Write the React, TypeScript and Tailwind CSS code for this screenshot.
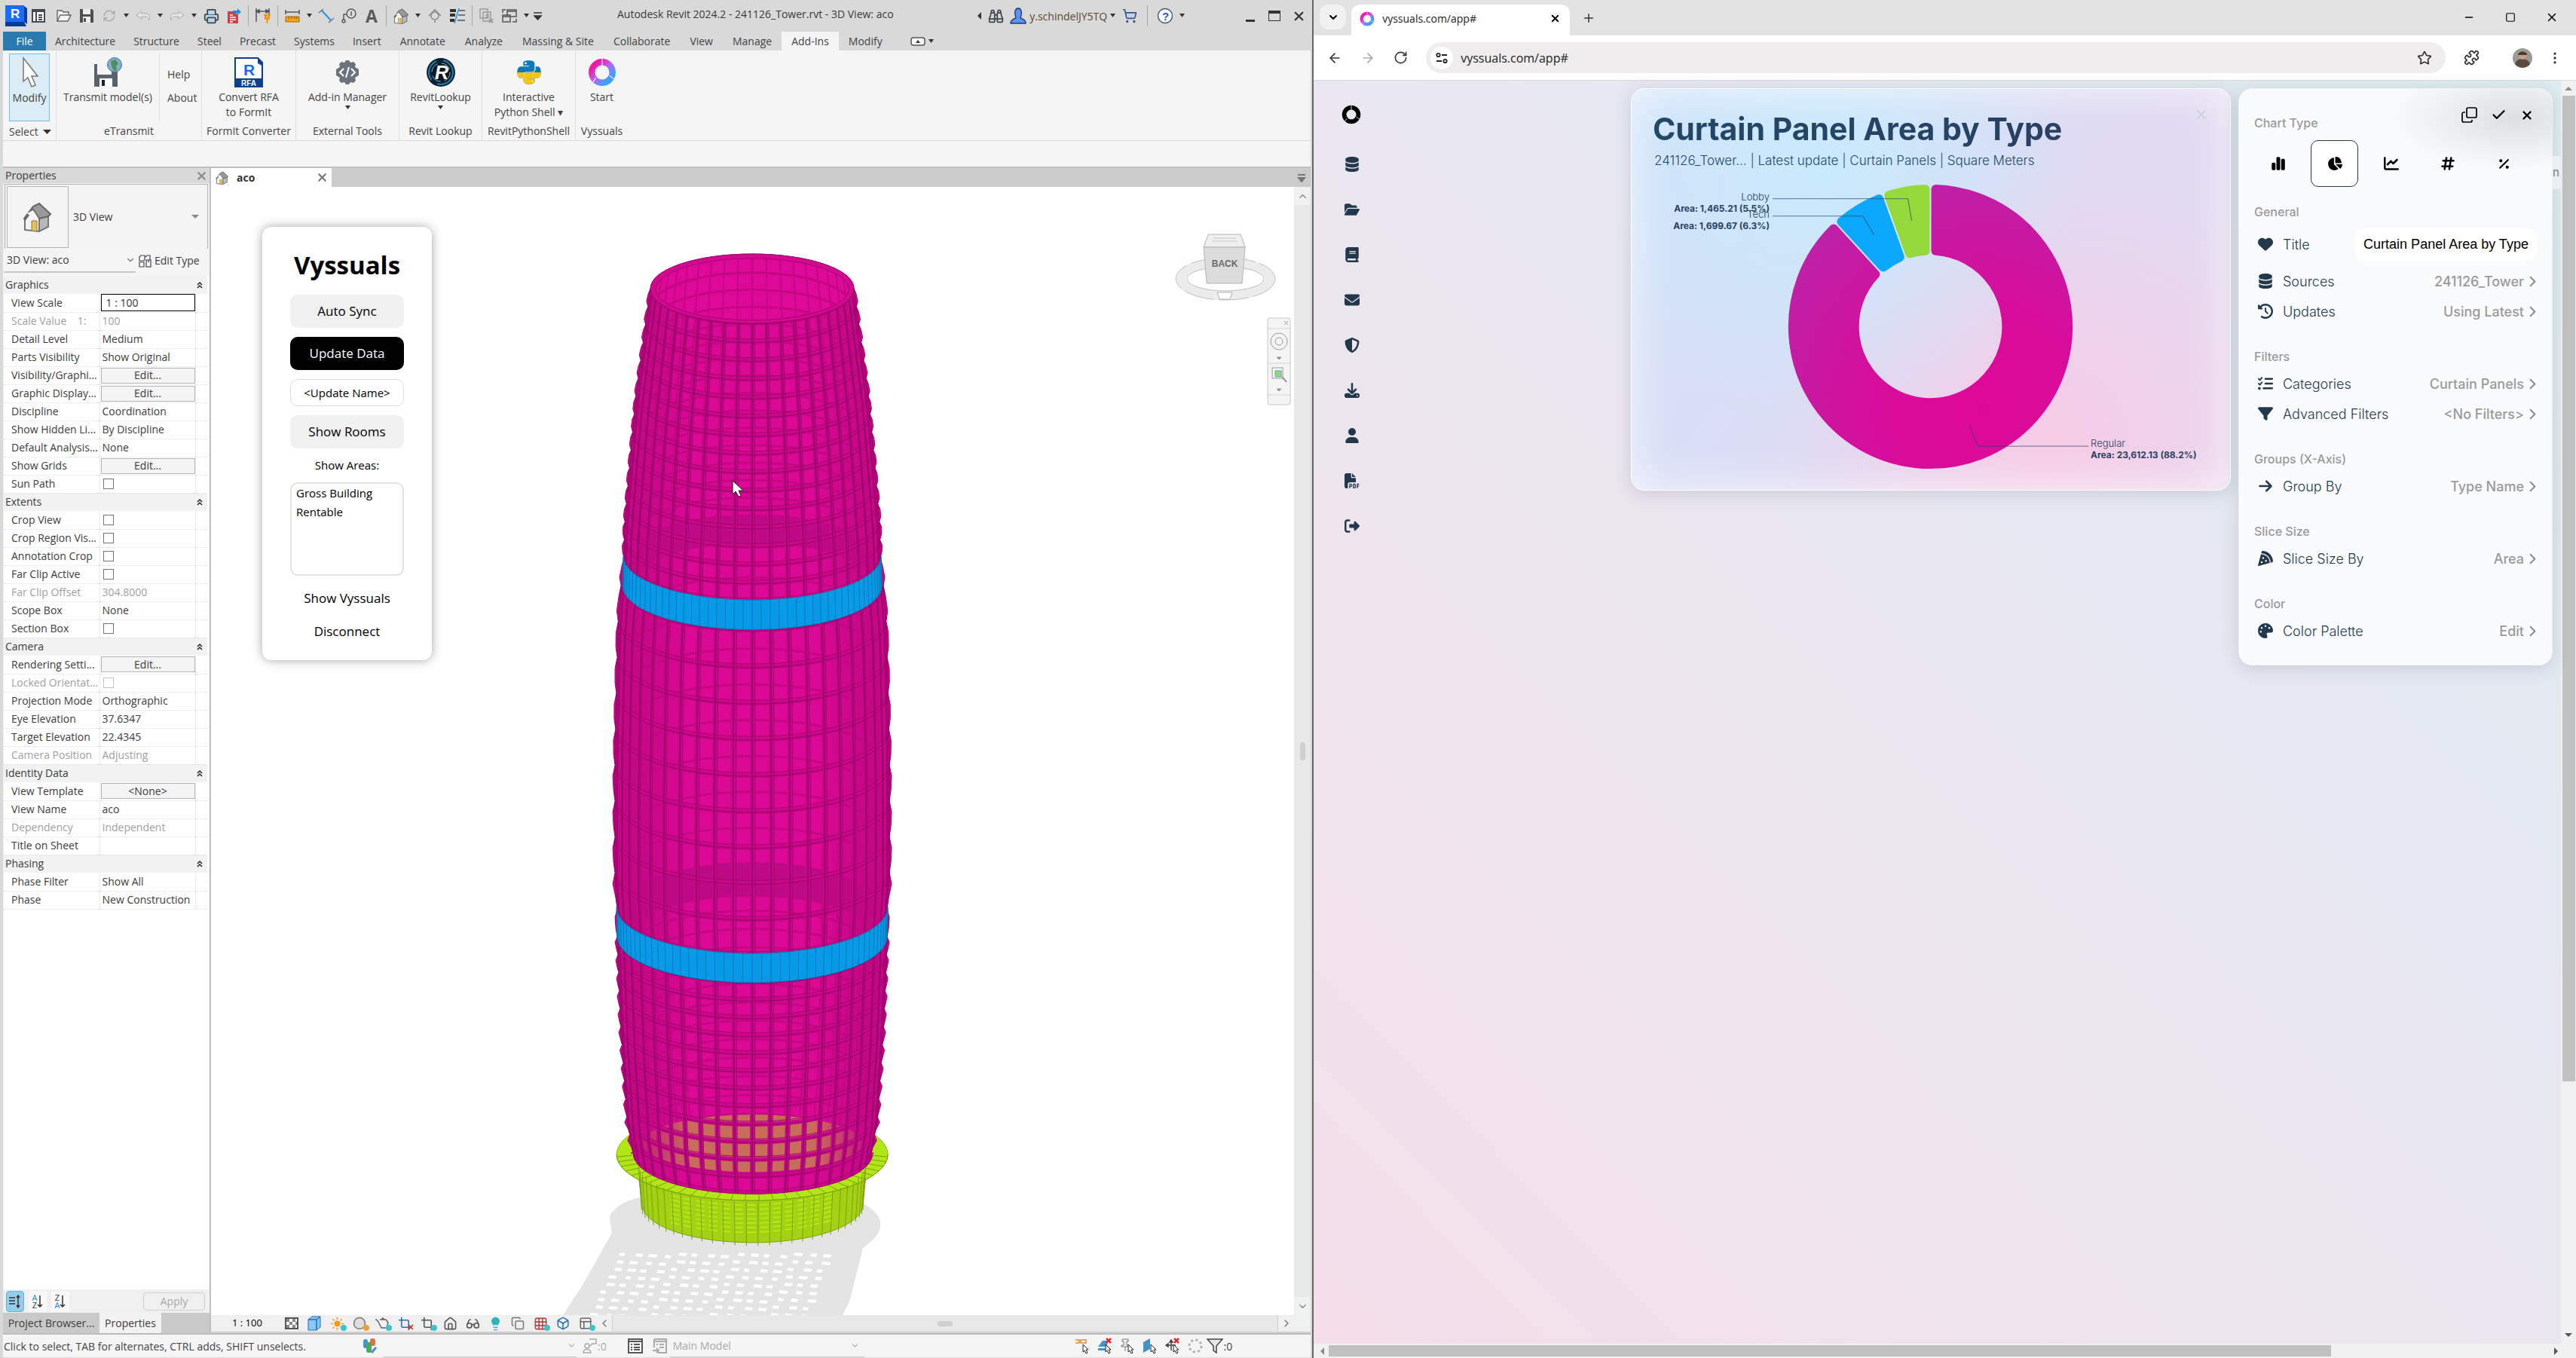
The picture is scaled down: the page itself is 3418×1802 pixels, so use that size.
// src/App.tsx
import type { ReactNode } from 'react';
import {
  ArrowLeft, ArrowRight, Binoculars, Box, Check, ChevronDown, ChevronLeft, ChevronRight, ChevronUp,
  Circle, Copy, EllipsisVertical, Glasses, Lightbulb, Minus, Plus, Printer, Puzzle, RotateCw,
  ShoppingCart, Square, Star, X, RefreshCw, Grid3x3, House, Crop, Sun, PanelsTopLeft,
} from 'lucide-react';
import {
  FaArrowRight, FaBook, FaChartLine, FaChartPie, FaChartSimple, FaClockRotateLeft, FaDatabase, FaDownload,
  FaEnvelope, FaFilePdf, FaFilter, FaFolderOpen, FaHashtag, FaHeart, FaListCheck, FaPalette, FaPercent,
  FaPizzaSlice, FaPython, FaRightFromBracket, FaShieldHalved, FaUser,
} from 'react-icons/fa6';

type Row = { label: string; kind?: 'text' | 'edit' | 'check' | 'input'; value?: string; off?: boolean };

const groups: { title: string; rows: Row[] }[] = [
  {
    title: 'Graphics',
    rows: [
      { label: 'View Scale', kind: 'input', value: '1 : 100' },
      { label: 'Scale Value    1:', value: '100', off: true },
      { label: 'Detail Level', value: 'Medium' },
      { label: 'Parts Visibility', value: 'Show Original' },
      { label: 'Visibility/Graphi...', kind: 'edit', value: 'Edit...' },
      { label: 'Graphic Display...', kind: 'edit', value: 'Edit...' },
      { label: 'Discipline', value: 'Coordination' },
      { label: 'Show Hidden Li...', value: 'By Discipline' },
      { label: 'Default Analysis...', value: 'None' },
      { label: 'Show Grids', kind: 'edit', value: 'Edit...' },
      { label: 'Sun Path', kind: 'check' },
    ],
  },
  {
    title: 'Extents',
    rows: [
      { label: 'Crop View', kind: 'check' },
      { label: 'Crop Region Vis...', kind: 'check' },
      { label: 'Annotation Crop', kind: 'check' },
      { label: 'Far Clip Active', kind: 'check' },
      { label: 'Far Clip Offset', value: '304.8000', off: true },
      { label: 'Scope Box', value: 'None' },
      { label: 'Section Box', kind: 'check' },
    ],
  },
  {
    title: 'Camera',
    rows: [
      { label: 'Rendering Setti...', kind: 'edit', value: 'Edit...' },
      { label: 'Locked Orientat...', kind: 'check', off: true },
      { label: 'Projection Mode', value: 'Orthographic' },
      { label: 'Eye Elevation', value: '37.6347' },
      { label: 'Target Elevation', value: '22.4345' },
      { label: 'Camera Position', value: 'Adjusting', off: true },
    ],
  },
  {
    title: 'Identity Data',
    rows: [
      { label: 'View Template', kind: 'edit', value: '<None>' },
      { label: 'View Name', value: 'aco' },
      { label: 'Dependency', value: 'Independent', off: true },
      { label: 'Title on Sheet', value: '' },
    ],
  },
  {
    title: 'Phasing',
    rows: [
      { label: 'Phase Filter', value: 'Show All' },
      { label: 'Phase', value: 'New Construction' },
    ],
  },
];

const tabs = ['Architecture', 'Structure', 'Steel', 'Precast', 'Systems', 'Insert'];
const moreTabs = ['Annotate', 'Analyze', 'Massing & Site', 'Collaborate', 'View', 'Manage', 'Add-Ins', 'Modify'];

/* ---------- small shared bits ---------- */

const Caret = () => (
  <svg width="15" height="8" viewBox="0 0 15 8" className="shrink-0">
    <path d="M4 1h7L7.5 6z" fill="#333" />
  </svg>
);

const Sep = () => <span className="mx-1 h-7 w-px shrink-0 bg-[#a8a8a8]" />;

const Slot = ({ label, children }: { label: string; children: ReactNode }) => (
  <button aria-label={label} className="flex h-7 w-[30px] shrink-0 items-center justify-center">
    {children}
  </button>
);

const HouseIcon = ({ size }: { size: number }) => (
  <svg width={size} height={size} viewBox="0 0 40 40">
    <path d="M3 21v16l19 2V22L13 10z" fill="#f4f4f4" stroke="#777" strokeWidth="2" />
    <path d="M22 22v17l12-6V17z" fill="#b9b9b9" stroke="#777" strokeWidth="2" />
    <path d="M2 22L14 6l8-4 15 14-3 3-12 3-8-12L3 24z" fill="#9a9a9a" stroke="#666" strokeWidth="2" />
    <path d="M14 22L6 15l8-4 7 11v2z" fill="#f4f4f4" />
    <path d="M12 25h7v14l-7-1z" fill="#e6bf55" stroke="#8a7b50" />
  </svg>
);

const Ring = ({ size, mono }: { size: number; mono?: boolean }) => (
  <svg width={size} height={size} viewBox="0 0 36 36">
    <defs>
      <linearGradient id="ringGrad" x1="0" y1="0" x2="1" y2="1">
        <stop offset="0.15" stopColor="#f315a4" />
        <stop offset="0.5" stopColor="#b06af0" />
        <stop offset="0.85" stopColor="#35a6ff" />
      </linearGradient>
    </defs>
    <circle cx="18" cy="18" r="13" fill="none" strokeWidth="8" stroke={mono ? '#000' : 'url(#ringGrad)'} />
    <path d="M18 0v10M27 22l8 6M10 25l-5 7" stroke={mono ? '#e8e8f0' : '#f2d8f4'} strokeWidth="1.2" />
  </svg>
);

/* ---------- title bar and ribbon ---------- */

function TitleBar() {
  return (
    <div className="flex h-[42px] items-center pl-0.5 text-[#444]">
      <svg width="30" height="28" viewBox="0 0 30 28">
        <path d="M26 1l4 3v21l-4-3z" fill="#0b3f9e" />
        <path d="M1 3l3-3v22h22l3 6H1z" fill="#0a3a94" />
        <path d="M1 0h25v22H1z" fill="#1a6bff" />
        <text x="8" y="17" fontSize="17" fontWeight="700" fill="#fff" fontFamily="Liberation Sans, sans-serif">R</text>
      </svg>
      <Slot label="Home">
        <svg width="18" height="18" viewBox="0 0 18 18">
          <path d="M1 1h16v16H1z" fill="#fff" stroke="#44494f" strokeWidth="2" />
          <path d="M1 3h16M6 3v14M9 8h5M9 11h5M9 14h5" stroke="#44494f" strokeWidth="2" />
        </svg>
      </Slot>
      <span className="w-1" />
      <Slot label="Open">
        <svg width="20" height="18" viewBox="0 0 20 18" fill="#f4f4f4" stroke="#666" strokeWidth="1.4">
          <path d="M1 16V2h6l2 2h7v4" />
          <path d="M1 16L5 8h14l-4 8z" />
        </svg>
      </Slot>
      <Slot label="Save">
        <svg width="18" height="18" viewBox="0 0 18 18">
          <path d="M0 0h16l2 2v16H0z" fill="#505050" />
          <path d="M4 0h10v7H4zM4 10h10v8H4z" fill="#ececec" />
          <path d="M5 12h3v5H5z" fill="#505050" />
        </svg>
      </Slot>
      <Slot label="Synchronize"><RefreshCw size={18} color="#aaa" /></Slot>
      <Caret />
      <Slot label="Undo">
        <svg width="20" height="14" viewBox="0 0 20 14" fill="#e6e6e6" stroke="#aaa"><path d="M1 6l7-5v3h6c5 0 5 5 4 9-1-4-3-5-5-5H8v3z" /></svg>
      </Slot>
      <Caret />
      <Slot label="Redo">
        <svg width="20" height="14" viewBox="0 0 20 14" fill="#e6e6e6" stroke="#aaa"><path d="M19 6l-7-5v3H6C1 4 1 9 2 13c1-4 3-5 5-5h5v3z" /></svg>
      </Slot>
      <Caret />
      <Slot label="Print"><Printer size={21} color="#444" fill="#b8d8ef" /></Slot>
      <Slot label="Export PDF">
        <svg width="20" height="20" viewBox="0 0 20 20">
          <path d="M2 4h9l5 5v11H2z" fill="#c8414b" />
          <path d="M5 9h4M5 12h8M5 15h8M5 18h4" stroke="#fff" strokeWidth="1.3" />
          <path d="M9 3h6V0l5 5-5 4V6H9z" fill="#1d8ce8" />
        </svg>
      </Slot>
      <Sep />
      <Slot label="Activate dimensions">
        <svg width="22" height="22" viewBox="0 0 22 22">
          <path d="M2 1v18M19 1v9M2 5h17M2 5l4-2v4zM19 5l-4-2v4z" stroke="#555" strokeWidth="1.5" fill="#555" />
          <path d="M12 10h9M13 15h7M14 10v5h5v-5M16.500 15v6" stroke="#f0960c" strokeWidth="2" fill="#f6ad35" />
        </svg>
      </Slot>
      <Sep />
      <Slot label="Measure">
        <svg width="20" height="20" viewBox="0 0 20 20">
          <path d="M1 2v6M19 2v6M1 5h18" stroke="#555" strokeWidth="1.5" />
          <path d="M1 11h18v7H1z" fill="#f3a31d" stroke="#a86b00" />
          <path d="M5 11v3M9 11v3M13 11v3M16 11v3" stroke="#7a4c00" />
        </svg>
      </Slot>
      <Caret />
      <Slot label="Aligned dimension">
        <svg width="22" height="20" viewBox="0 0 22 20">
          <path d="M5 3l12 13" stroke="#2a93e0" strokeWidth="2" />
          <path d="M1 6l6-5M14 19l7-6" stroke="#6b7680" strokeWidth="1.500" />
        </svg>
      </Slot>
      <Slot label="Tag by category">
        <svg width="20" height="20" viewBox="0 0 20 20" fill="none" stroke="#555" strokeWidth="1.4">
          <circle cx="13" cy="7" r="6" />
          <path d="M7 8H3v8M13 4v6" />
          <circle cx="3" cy="17" r="2" />
        </svg>
      </Slot>
      <Slot label="Text"><span className="font-bold text-[23px] leading-6 text-[#5a5a5a]">A</span></Slot>
      <Sep />
      <Slot label="Default 3D view"><HouseIcon size={21} /></Slot>
      <Caret />
      <Slot label="Section">
        <svg width="18" height="20" viewBox="0 0 18 20" fill="none" stroke="#8a8a8a" strokeWidth="1.5">
          <path d="M9 1v3M9 16v3" />
          <circle cx="9" cy="10" r="5" />
          <path d="M1 10l8-8 8 8" />
        </svg>
      </Slot>
      <Slot label="Thin lines">
        <svg width="22" height="20" viewBox="0 0 22 20">
          <path d="M1 3h8M1 9h7M1 16h6" stroke="#333" strokeWidth="4" />
          <path d="M13 3h8M12 9h9M11 16h10" stroke="#555" strokeWidth="1.5" />
          <path d="M13 0L7 20" stroke="#2a93e0" strokeWidth="1.5" />
        </svg>
      </Slot>
      <Sep />
      <Slot label="Close inactive views">
        <svg width="20" height="20" viewBox="0 0 20 20" fill="none" stroke="#999" strokeWidth="1.4">
          <path d="M1 1h10v12H1zM5 5h10v12H5zM8 9h5M8 12h5" />
          <path d="M13 14l5 5M18 14l-5 5" strokeWidth="2" />
        </svg>
      </Slot>
      <Slot label="Switch windows">
        <svg width="22" height="20" viewBox="0 0 22 20" fill="none" stroke="#555" strokeWidth="1.5">
          <path d="M8 2h12v9H8zM8 4h12M2 9h10v9H2zM2 11h10M2 6V2h4M20 14v4h-5" />
        </svg>
      </Slot>
      <Caret />
      <svg width="15" height="12" viewBox="0 0 15 12"><path d="M2 2h11M3 6h9l-4.500 5z" stroke="#333" strokeWidth="1.500" fill="#333" /></svg>
      <span className="ml-[98px] pb-1 text-[14px] leading-5 text-[#3a3a3a]">Autodesk Revit 2024.2 - 241126_Tower.rvt - 3D View: aco</span>

      <div className="ml-auto flex items-center">
        <svg width="12" height="12" viewBox="0 0 12 12"><path d="M8 1v10L3 6z" fill="#333" /></svg>
        <Slot label="Search"><Binoculars size={21} color="#3f4650" /></Slot>
        <Slot label="Account">
          <svg width="22" height="22" viewBox="0 0 22 22">
            <path d="M1 21c0-5 4-6 7-7l-1-4c-1-4 0-9 4-9s5 5 4 9l-1 4c3 1 7 2 7 7z" fill="#5c92f5" stroke="#23386b" strokeWidth="1.3" />
          </svg>
        </Slot>
        <button className="flex items-center text-[14px] text-[#5b4630]">y.schindelJY5TQ<Caret /></button>
        <Slot label="App store"><ShoppingCart size={20} color="#3c5687" fill="#c4d2ee" /></Slot>
        <span className="mx-2 h-7 w-px bg-[#a8a8a8]" />
        <Slot label="Help">
          <svg width="22" height="22" viewBox="0 0 22 22">
            <circle cx="11" cy="11" r="9.500" fill="#fff" stroke="#4a5a78" strokeWidth="1.500" />
            <text x="7" y="16.500" fontSize="15" fontWeight="700" fill="#1c5fc4" fontFamily="Liberation Sans, sans-serif">?</text>
          </svg>
        </Slot>
        <Caret />
        <button aria-label="Minimize" className="ml-[67px] flex h-8 w-8 items-center justify-center"><span className="mt-3 h-[3px] w-3 bg-[#333]" /></button>
        <button aria-label="Maximize" className="flex h-8 w-8 items-center justify-center"><span className="h-[14px] w-4 border border-t-4 border-[#333]" /></button>
        <button aria-label="Close" className="flex h-8 w-8 items-center justify-center"><X size={19} strokeWidth={3} color="#333" /></button>
      </div>
    </div>
  );
}

function RibbonTabs() {
  return (
    <div className="flex h-[25px] text-[14px] leading-[25px] text-[#444]">
      <button className="w-[57px] bg-[#2a7ab0] text-white">File</button>
      {tabs.map(t => <button key={t} className="px-3">{t}</button>)}
      {moreTabs.map(t => (
        <button key={t} className={`px-[13px] ${t === 'Add-Ins' ? 'bg-[#f5f5f5]' : ''}`}>{t}</button>
      ))}
      <button aria-label="Ribbon display" className="ml-6 flex items-center">
        <svg width="20" height="12" viewBox="0 0 20 12">
          <rect x="1" y="1" width="18" height="10" rx="3" fill="#fafafa" stroke="#555" strokeWidth="1.500" />
          <path d="M7 8h6l-3-4z" fill="#333" />
        </svg>
        <Caret />
      </button>
    </div>
  );
}

function Tool({ icon, lines, caret }: { icon: ReactNode; lines: string[]; caret?: boolean }) {
  return (
    <button className="flex w-full flex-col items-center pt-1.5">
      <span className="flex h-[46px] items-center">{icon}</span>
      {lines.map(l => <span key={l} className="leading-5">{l}</span>)}
      {caret && <Caret />}
    </button>
  );
}

function Panel({ title, className, children }: { title: string; className: string; children: ReactNode }) {
  return (
    <div className={`flex flex-col border-r border-[#dedede] text-center ${className}`}>
      <div className="flex flex-1 items-start">{children}</div>
      <div className="h-[22px] leading-5">{title}</div>
    </div>
  );
}

function Ribbon() {
  return (
    <>
      <div className="flex h-[120px] border-b border-[#d8d8d8] bg-[#f5f5f5] text-[14px] text-[#444]">
        <div className="flex w-[71px] flex-col border-r border-[#dedede]">
          <button className="mx-auto mt-1 flex h-[90px] w-[54px] flex-col items-center border border-[#70c0e0] bg-[#dcecf5]">
            <svg width="26" height="46" viewBox="0 0 26 46" className="mt-0.5">
              <path d="M5 3v31l6-5 5 12 5-2-5-12h8z" fill="#fff" stroke="#777" strokeWidth="1.500" />
            </svg>
            <span className="leading-5">Modify</span>
          </button>
          <button className="mt-auto flex h-[22px] items-center pl-2 leading-5">
            Select
            <svg width="22" height="8" viewBox="0 0 22 8"><path d="M6 1h11l-5.500 6z" fill="#333" /></svg>
          </button>
        </div>
        <Panel title="eTransmit" className="w-[193px]">
          <div className="w-[136px]">
            <Tool
              lines={['Transmit model(s)']}
              icon={
                <svg width="38" height="40" viewBox="0 0 38 40">
                  <path d="M1 9h22l9 5v25H1z" fill="#5a626c" />
                  <path d="M5 9h19v14H5z" fill="#f4f4f4" />
                  <path d="M8 28h17v11H8z" fill="#fff" />
                  <path d="M11 30h4v8h-4z" fill="#222" />
                  <circle cx="28" cy="10" r="9.500" fill="#7fb0cf" stroke="#4f6f86" />
                  <path d="M23 5l6-2 4 5-3 4 1 5-4 1-3-6z" fill="#4f8f5c" />
                </svg>
              }
            />
          </div>
          <div className="mt-1 flex h-[90px] flex-1 flex-col items-start gap-[11px] border-l border-[#dedede] pl-2.5 pt-[18px]">
            <button className="leading-5">Help</button>
            <button className="leading-5">About</button>
          </div>
        </Panel>
        <Panel title="FormIt Converter" className="w-[125px]">
          <Tool
            lines={['Convert RFA', 'to FormIt']}
            icon={
              <svg width="38" height="40" viewBox="0 0 38 40">
                <path d="M1 1h30l6 6v32H1z" fill="#fff" stroke="#0d3f8f" strokeWidth="2" />
                <path d="M31 0l7 9v3l-7-4z" fill="#0d3f8f" />
                <path d="M1 28h36v12H1z" fill="#0d3f8f" />
                <text x="12" y="24" fontSize="21" fontWeight="700" fill="#1668ff" fontFamily="Liberation Sans, sans-serif">R</text>
                <text x="9" y="38" fontSize="10" fontWeight="700" fill="#fff" fontFamily="Liberation Sans, sans-serif">RFA</text>
              </svg>
            }
          />
        </Panel>
        <Panel title="External Tools" className="w-[137px]">
          <Tool
            caret
            lines={['Add-in Manager']}
            icon={
              <svg width="36" height="36" viewBox="0 0 36 36">
                <path d="M10 4l4 1 2-3h4l2 3 4-1 3 3-1 4 5 3v8l-5 3 1 4-3 3-4-1-2 3h-4l-2-3-4 1-3-3 1-4-5-3v-8l5-3-1-4z" fill="#6b747d" />
                <path d="M13 13l-5 5 5 5M23 13l5 5-5 5M20 11l-4 14" fill="none" stroke="#fff" strokeWidth="2" />
              </svg>
            }
          />
        </Panel>
        <Panel title="Revit Lookup" className="w-[110px]">
          <Tool
            caret
            lines={['RevitLookup']}
            icon={
              <svg width="40" height="40" viewBox="0 0 40 40">
                <circle cx="20" cy="20" r="19" fill="#0b2233" />
                <circle cx="20" cy="20" r="16" fill="none" stroke="#2c7aa0" strokeWidth="2" strokeDasharray="30 9" />
                <circle cx="20" cy="20" r="12" fill="#0a1824" stroke="#79b6cd" strokeDasharray="14 5" />
                <text x="12" y="29" fontSize="25" fontWeight="700" fontStyle="italic" fill="#fff" fontFamily="Liberation Sans, sans-serif">R</text>
              </svg>
            }
          />
        </Panel>
        <Panel title="RevitPythonShell" className="w-[124px]">
          <Tool
            lines={['Interactive', 'Python Shell ▾']}
            icon={
              <span className="relative flex">
                <FaPython size={36} color="#0f78b8" />
                <span className="absolute inset-x-0 bottom-0 h-1/2 overflow-hidden">
                  <FaPython size={36} color="#f8c50c" className="absolute bottom-0" />
                </span>
              </span>
            }
          />
        </Panel>
        <div className="flex w-[69px] flex-col text-center">
          <div className="flex-1"><Tool lines={['Start']} icon={<Ring size={38} />} /></div>
          <div className="h-[22px] leading-5">Vyssuals</div>
        </div>
      </div>
      <div className="h-9 border-b-2 border-[#c0c0c0] bg-[#f5f5f5]" />
    </>
  );
}

/* ---------- properties palette ---------- */

function Cell({ row }: { row: Row }) {
  if (row.kind === 'edit')
    return <button className="block h-[21px] w-full border border-[#b4b4b4] bg-[#f4f4f4] text-center leading-[18px]">{row.value}</button>;
  if (row.kind === 'input')
    return <input aria-label={row.label} defaultValue={row.value} className="block h-[23px] w-full border border-black bg-white px-1.5 text-[#333]" />;
  if (row.kind === 'check')
    return (
      <input
        type="checkbox"
        aria-label={row.label}
        disabled={row.off}
        className="ml-[3px] block size-[14px] appearance-none border border-[#777] bg-white disabled:border-[#c4c4c4]"
      />
    );
  return <span className="block truncate pl-0.5">{row.value}</span>;
}

function Properties() {
  return (
    <aside className="flex w-[276px] shrink-0 flex-col border-r-2 border-[#c0c0c0] bg-[#f0f0f0] text-[14px] leading-5 text-[#3c3c3c]">
      <div className="flex h-5 items-center bg-[#d9d9d9] pl-[3px]">
        Properties
        <button aria-label="Close palette" className="ml-auto mr-0.5"><X size={17} strokeWidth={3} color="#888" /></button>
      </div>
      <div className="mx-0.5 mt-px flex h-[86px] items-center border border-b-0 border-[#b4b4b4] bg-[#f4f4f4]">
        <span className="ml-0.5 flex size-[82px] items-center justify-center border border-[#b4b4b4]"><HouseIcon size={40} /></span>
        <span className="ml-1.5">3D View</span>
        <svg width="12" height="8" viewBox="0 0 12 8" className="ml-auto mr-2.5"><path d="M1 1h10L6 6z" fill="#888" /></svg>
      </div>
      <div className="flex h-9 items-start bg-[#f5f5f5] px-px">
        <label className="flex h-8 w-[175px] items-center border-b-2 border-[#c8c8c8] pl-1">
          <select aria-label="Element filter" className="flex-1 appearance-none bg-transparent"><option>3D View: aco</option></select>
          <ChevronDown size={14} color="#777" />
        </label>
        <button className="ml-1 flex h-8 items-center gap-1">
          <svg width="17" height="17" viewBox="0 0 17 17" fill="#fff" stroke="#444" strokeWidth="1.200">
            <path d="M1 3l2-2h5v5L7 8H1zM9 3l2-2h4v6M1 10h6v6H1z" />
            <rect x="10" y="7" width="6" height="9" />
            <path d="M12 9h2" stroke="#2a7ad0" strokeWidth="2" />
          </svg>
          Edit Type
        </button>
      </div>
      <div className="mx-px flex-1 bg-white pr-0.5">
        <table className="w-full table-fixed border-collapse text-left">
          <colgroup><col className="w-[127px]" /><col className="w-[127px]" /><col /></colgroup>
          {groups.map(g => (
            <tbody key={g.title}>
              <tr className="h-6 bg-[#f2f2f2]">
                <th colSpan={2} className="p-0 pl-0.5 font-normal">{g.title}</th>
                <td className="p-0">
                  <svg width="12" height="12" viewBox="0 0 12 12" fill="none" stroke="#222" strokeWidth="1.500">
                    <path d="M3 6l3-3 3 3M3 10l3-3 3 3" />
                  </svg>
                </td>
              </tr>
              {g.rows.map(r => (
                <tr key={r.label} className={`h-6 ${r.off ? 'text-[#a0a0a0]' : ''}`}>
                  <th className="overflow-hidden whitespace-pre border-b border-r border-dotted border-[#dcdcdc] p-0 pl-2.5 font-normal">{r.label}</th>
                  <td className="border-b border-r border-dotted border-[#dcdcdc] p-0 pl-px">
                    <Cell row={r} />
                  </td>
                  <td className="border-b border-dotted border-[#dcdcdc] p-0" />
                </tr>
              ))}
            </tbody>
          ))}
        </table>
      </div>
      <div className="flex h-[31px] items-center gap-1.5 pl-1 pr-1.5">
        <button aria-label="Sort by group" className="flex h-7 w-6 items-center justify-center rounded border border-[#60b4dc] bg-[#94cdea]">
          <svg width="18" height="18" viewBox="0 0 18 18" stroke="#333" strokeWidth="1.500" fill="none"><path d="M1 4h8M1 8h8M1 12h8M13 2v14M11 4l2-3 2 3M11 14l2 3 2-3" /></svg>
        </button>
        {['AZ', 'ZA'].map(k => (
          <button key={k} aria-label={`Sort ${k}`} className="flex h-7 w-6 items-center justify-center bg-[#f8f8f8] text-[11px] leading-[10px]">
            <span className="flex flex-col"><span className={k === 'AZ' ? 'text-[#1a84d8]' : ''}>{k[0]}</span><span className={k === 'ZA' ? 'text-[#1a84d8]' : ''}>{k[1]}</span></span>
            <svg width="8" height="18" viewBox="0 0 8 18" stroke="#333" strokeWidth="1.500" fill="none"><path d="M4 1v14M1 13l3 3 3-3" /></svg>
          </button>
        ))}
        <button className="ml-auto h-6 w-[82px] rounded border border-[#d0d0d0] text-[#a8a8a8]">Apply</button>
      </div>
      <div className="flex h-[27px] bg-[#c9c9c9]">
        <button className="w-[128px]">Project Browser...</button>
        <button className="w-[82px] bg-[#f2f2f2]">Properties</button>
      </div>
    </aside>
  );
}

/* ---------- tower model ---------- */

const CX = 998;
const TILT = 0.34;
const profile = [
  [383, 135], [457, 145], [525, 154], [600, 161], [696, 169], [740, 170], [777, 174], [829, 178],
  [1000, 182], [1160, 182], [1206, 179], [1243, 179], [1366, 174], [1485, 166], [1530, 158],
];

const radiusAt = (y: number) => {
  for (let i = 1; i < profile.length; i++) {
    const [y0, r0] = profile[i - 1];
    const [y1, r1] = profile[i];
    if (y <= y1) return r0 + ((r1 - r0) * (y - y0)) / (y1 - y0);
  }
  return 158;
};

const range = (from: number, to: number, n: number) =>
  Array.from({ length: n + 1 }, (_, i) => from + ((to - from) * i) / n);

const arc = (y: number, r: number, front: boolean) =>
  `M${CX - r} ${y}A${r} ${r * TILT} 0 0 ${front ? 0 : 1} ${CX + r} ${y}`;

const upright = (levels: number[], deg: number, side: number) => {
  const a = (deg * Math.PI) / 180;
  return levels
    .map((y, i) => {
      const r = radiusAt(y);
      return `${i ? 'L' : 'M'}${(CX + r * Math.sin(a)).toFixed(1)} ${(y + side * TILT * r * Math.cos(a)).toFixed(1)}`;
    })
    .join('');
};

const band = (y0: number, y1: number, r0: number, r1: number, side: number) =>
  `M${CX - r0} ${y0}A${r0} ${r0 * TILT} 0 0 ${side > 0 ? 0 : 1} ${CX + r0} ${y0}L${CX + r1} ${y1}A${r1} ${r1 * TILT} 0 0 ${side > 0 ? 1 : 0} ${CX - r1} ${y1}Z`;

const zones = [range(383, 740, 15), range(777, 1206, 9), range(1243, 1530, 12)];
const spokes = range(-88, 88, 22);
const fine = range(-88, 88, 44);

// stepped outline: every storey leans out a little past the one below
const outline = (() => {
  const right: string[] = [];
  const left: string[] = [];
  zones.flat().forEach((y, i, all) => {
    const next = all[i + 1] ?? y;
    const r = radiusAt(y);
    [[y, r], [y + (next - y) * 0.3, r + 3], [y + (next - y) * 0.7, radiusAt(next) + 2]].forEach(([py, pr]) => {
      right.push(`L${(CX + pr).toFixed(1)} ${py.toFixed(1)}`);
      left.unshift(`L${(CX - pr).toFixed(1)} ${py.toFixed(1)}`);
    });
  });
  return `M863 383A135 46 0 0 1 1133 383${right.join('')}A158 54 0 0 1 840 1530${left.join('')}Z`;
})();

// gaps of light in the shadow, denser away from the podium
const holes = Array.from({ length: 9 * 15 }, (_, k) => {
  const i = Math.floor(k / 15);
  const j = k % 15;
  const y = 1662 + i * 10 + ((j * 5) % 4);
  const t = (y - 1636) / 109;
  const x = 836 - 55 * t + j * (19 + t) + ((i * 7 + j * 3) % 5);
  const w = 7 + ((i + j * 2) % 5);
  return `M${x} ${y}l${w} 1l-2 4l${-w} -1z`;
}).join('');

function Tower() {
  return (
    <svg viewBox="281 248 1435 1497" className="absolute inset-0 size-full" role="img" aria-label="3D model of the tower">
      <defs>
        <linearGradient id="edgeShade">
          <stop offset="0" stopColor="#c00782" />
          <stop offset="0.1" stopColor="#c00782" stopOpacity="0.8" />
          <stop offset="0.28" stopColor="#c00782" stopOpacity="0.1" />
          <stop offset="0.72" stopColor="#c00782" stopOpacity="0.1" />
          <stop offset="0.9" stopColor="#c00782" stopOpacity="0.8" />
          <stop offset="1" stopColor="#c00782" />
        </linearGradient>
        <clipPath id="body"><path d={outline} /></clipPath>
      </defs>

      {/* ground shadow */}
      <path d="M847 1589C825 1595 808 1607 809 1618L812 1636L773 1705L747 1745H1118L1127 1727L1145 1656C1160 1645 1170 1635 1168 1621C1166 1611 1155 1602 1147 1598Z" fill="#e4e4e4" />
      <path d={holes} fill="#fff" />

      {/* podium */}
      <path d="M847 1560L853 1603A146 50 0 0 0 1144 1603L1149 1560Z" fill="#a3d213" stroke="#7fa012" />
      {range(1584, 1632, 8).map(y => (
        <path key={y} d={`M890 ${y - 10}Q998 ${y + 18} 1108 ${y - 14}`} fill="none" stroke="#b2e916" strokeWidth="2" strokeDasharray="12 5" />
      ))}
      <ellipse cx={CX} cy="1532" rx="180" ry="61" fill="#b0e714" stroke="#8fb814" />
      {range(-87, 87, 29).map(d => {
        const a = (d * Math.PI) / 180;
        const s = Math.sin(a);
        const c = Math.cos(a);
        return (
          <g key={d} stroke="#7f9f16" strokeWidth="1">
            <path d={`M${CX + 156 * s} ${1530 + 53 * c}L${CX + 180 * s} ${1532 + 61 * c}`} />
            <path d={`M${CX + 151 * s} ${1545 + 50 * c}L${CX + 147 * s} ${1603 + 50 * c}`} />
          </g>
        );
      })}
      <path d={arc(1532, 180, true)} fill="none" stroke="#7f9f16" />

      {/* shell */}
      <path d={outline} fill="#df0999" stroke="#a5066f" />
      <g clipPath="url(#body)" fill="none">
        {zones.map((lv, z) => (
          <g key={z} stroke="#c40884" strokeWidth="3">
            {lv.map(y => <path key={y} d={arc(y, radiusAt(y) - 6, false)} />)}
            {spokes.map(d => <path key={d} d={upright(lv, d * 0.98, -1)} strokeWidth="2" />)}
          </g>
        ))}
        <path d={band(740, 777, 160, 164, -1)} fill="#bd0a86" />
        <path d={band(1200, 1246, 164, 166, -1)} fill="#bd0a86" />
        <ellipse cx={CX} cy="1517" rx="146" ry="38" fill="#c87855" />
        <path d={`${outline}M863 383A135 46 0 0 0 1133 383A135 46 0 0 0 863 383Z`} fill="url(#edgeShade)" fillRule="evenodd" />
        {zones.map((lv, z) => (
          <g key={z}>
            {spokes.map(d => <path key={d} d={upright(lv, d, 1)} stroke="#c80887" strokeWidth="6" />)}
            {lv.map(y => <path key={y} d={arc(y, radiusAt(y), true)} stroke="#c80887" strokeWidth="6" />)}
            {spokes.map(d => <path key={d} d={upright(lv, d, 1)} stroke="#9c0670" strokeWidth="2" />)}
            {spokes.map(d => <path key={d} d={upright(lv, d + 1.2, 1)} stroke="#a5066f" strokeWidth="1" />)}
            {lv.map(y => <path key={y} d={arc(y + 1, radiusAt(y), true)} stroke="#94056a" strokeWidth="1" />)}
            {lv.map(y => <path key={y} d={arc(y - 4, radiusAt(y), true)} stroke="#a5066f" strokeWidth="1" />)}
          </g>
        ))}
      </g>
      <ellipse cx={CX} cy="383" rx="132" ry="43" fill="none" stroke="#d40991" strokeWidth="6" />
      <ellipse cx={CX} cy="383" rx="135" ry="46" fill="none" stroke="#a5066f" />
      <ellipse cx={CX} cy="384" rx="128" ry="41" fill="none" stroke="#a5066f" />

      {/* plant floors */}
      {[[738, 777, 171, 172], [1204, 1243, 180, 179]].map(([y0, y1, r0, r1]) => (
        <g key={y0} stroke="#0876b4" strokeWidth="1">
          <path d={band(y0, y1, r0, r1, 1)} fill="#069ae8" />
          {fine.map(d => {
            const a = (d * Math.PI) / 180;
            return <path key={d} d={`M${CX + r0 * Math.sin(a)} ${y0 + TILT * r0 * Math.cos(a)}L${CX + r1 * Math.sin(a)} ${y1 + TILT * r1 * Math.cos(a)}`} />;
          })}
        </g>
      ))}

      {/* pointer */}
      <path d="M972 638v18l4-4 4 7 3-1-3-7h6z" fill="#fff" stroke="#222" />

      {/* view cube */}
      <g>
        <ellipse cx="1626" cy="370" rx="59" ry="22" fill="none" stroke="#ececec" strokeWidth="13" />
        <ellipse cx="1626" cy="370" rx="66" ry="28" fill="none" stroke="#c4c4c4" strokeDasharray="40 6" />
        <ellipse cx="1626" cy="370" rx="51" ry="16" fill="none" stroke="#c4c4c4" />
        <path d="M1603 311h43l6 17h-55z" fill="#f0f0f0" stroke="#b4b4b4" />
        <path d="M1597 328h55l-4 48h-47z" fill="#dcdcdc" stroke="#b4b4b4" />
        <text x="1625" y="354" fontSize="12" fontWeight="700" textAnchor="middle" fill="#6a6a6a" fontFamily="Liberation Sans, sans-serif">BACK</text>
        <path d="M1610 316h30M1608 320h34" stroke="#c8c8c8" />
        <path d="M1615 388h20l-3 9h-14z" fill="#fff" stroke="#b4b4b4" />
      </g>

      {/* navigation bar */}
      <g fill="none" stroke="#9a9a9a">
        <rect x="1682" y="422" width="30" height="115" rx="3" fill="#f4f4f4" stroke="#c8c8c8" />
        <path d="M1682 436h30M1682 482h30M1682 524h30" stroke="#d4d4d4" />
        <path d="M1704 426l5 5m0-5l-5 5" />
        <circle cx="1697" cy="453" r="11" />
        <circle cx="1697" cy="453" r="5" />
        <path d="M1694 474h6l-3 3zM1694 516h6l-3 3z" fill="#888" />
        <rect x="1688" y="488" width="14" height="14" />
        <path d="M1692 492h8v8h-8z" fill="#8fd392" stroke="#6fae73" />
        <path d="M1701 500l6 7" strokeWidth="2" />
      </g>
    </svg>
  );
}

function VyssualsPanel() {
  const soft = 'h-11 rounded-[10px] bg-[#f0f0f0]';
  return (
    <section className="absolute left-[68px] top-[53px] flex w-[225px] flex-col gap-3 rounded-xl bg-white px-[37px] pb-[22px] pt-7 text-[17px] text-black shadow-[0_0_14px_rgba(0,0,0,0.35)]">
      <h1 className="mb-1 text-center text-[33px] font-bold leading-[46px]">Vyssuals</h1>
      <button className={soft}>Auto Sync</button>
      <button className="h-11 rounded-[10px] bg-black text-white">Update Data</button>
      <input aria-label="Update name" defaultValue="<Update Name>" className="h-9 rounded-[10px] border border-[#ddd] text-center text-[15px]" />
      <button className={soft}>Show Rooms</button>
      <label htmlFor="areas" className="-mt-px text-center text-[15px] leading-[22px]">Show Areas:</label>
      <select id="areas" multiple className="h-[124px] appearance-none overflow-hidden rounded-[10px] border-2 border-[#e2e2e2] px-1.5 py-0.5 text-[15px]">
        <option className="h-[25px]">Gross Building</option>
        <option className="h-[25px]">Rentable</option>
      </select>
      <button className="mt-0.5 h-8">Show Vyssuals</button>
      <button className="h-8">Disconnect</button>
    </section>
  );
}

function ViewControls() {
  const teal = '#2bb5bd';
  const icons: [string, ReactNode][] = [
    ['Detail level', (
      <svg width="18" height="16" viewBox="0 0 18 16">
        <rect x="1" y="1" width="16" height="14" fill="#fff" stroke="#555" strokeWidth="2" />
        <path d="M2 2h4v4H2zM10 2h4v4h-4zM6 6h4v4H6zM14 6h2v4h-2zM2 10h4v4H2zM10 10h4v4h-4z" fill="#888" />
      </svg>
    )],
    ['Visual style', (
      <svg width="18" height="20" viewBox="0 0 18 20" stroke="#1c6fb8" fill="#8cc8fb">
        <path d="M1 5h11v14H1zM1 5l5-4h11l-5 4zM12 5l5-4v14l-5 4z" />
      </svg>
    )],
    ['Sun path', <Sun size={19} color="#f39a1c" fill="#f39a1c" />],
    ['Shadows', <Circle size={18} color="#777" fill="#ddd" />],
    ['Rendering', (
      <svg width="20" height="16" viewBox="0 0 20 16" fill="none" stroke="#666" strokeWidth="1.500"><path d="M1 3c3 0 4 3 5 5l3 6h7l2-7-3-4H7M9 3l2-2 2 2" /></svg>
    )],
    ['Crop view', <Crop size={19} color="#2a6fae" />],
    ['Show crop', <Crop size={19} color="#555" />],
    ['Lock view', <House size={19} color="#555" />],
    ['Temporary hide', <Glasses size={19} color="#555" />],
    ['Reveal hidden', <Lightbulb size={19} color={teal} fill={teal} />],
    ['View properties', <Copy size={18} color="#777" />],
    ['Analytical model', <Grid3x3 size={19} color="#b2474d" />],
    ['Displacement', <Box size={18} color="#2a6fae" />],
    ['Constraints', <PanelsTopLeft size={18} color="#666" />],
  ];
  return (
    <div className="flex h-[22px] items-center bg-[#f0f0f0] text-[14px]">
      <span className="w-[92px] pl-7 text-[13px]">1 : 100</span>
      {icons.map(([label, icon], i) => (
        <button key={label} aria-label={label} className="relative flex h-5 w-[30px] items-center justify-center">
          {icon}
          {[2, 3, 4, 6, 11, 13].includes(i) && <span className={`absolute bottom-0 right-0.5 size-2 rounded-full ${i === 3 ? 'bg-[#f0a030]' : 'bg-[#3cc4cb]'}`} />}
          {i === 5 && <X size={10} strokeWidth={4} color="#e02828" className="absolute bottom-0 right-0.5" />}
        </button>
      ))}
      <button aria-label="Scroll left" className="flex w-5 justify-center"><ChevronLeft size={16} color="#777" /></button>
      <div className="flex h-full flex-1 items-center justify-center border-l border-[#d0d0d0] bg-[#e8e8e8]"><span className="h-[7px] w-5 rounded-sm bg-[#cfcfcf]" /></div>
      <button aria-label="Scroll right" className="flex h-full w-[22px] items-center justify-center border-l border-[#d0d0d0]"><ChevronRight size={16} color="#777" /></button>
      <span className="w-[22px]" />
    </div>
  );
}

function StatusBar() {
  return (
    <div className="flex h-[32px] shrink-0 items-center border-t-2 border-[#bcbcbc] bg-[#f5f5f5] text-[14px] text-[#444]">
      <span className="w-[476px] pl-px">Click to select, TAB for alternates, CTRL adds, SHIFT unselects.</span>
      <svg width="22" height="22" viewBox="0 0 22 22">
        <rect x="2" y="2" width="6" height="12" rx="3" fill="#3f93cf" />
        <rect x="11" y="1" width="7" height="10" rx="3" fill="#e07440" />
        <rect x="6" y="6" width="7" height="14" rx="3" fill="#4aa860" />
        <path d="M13 20l6-7" stroke="#3f93cf" strokeWidth="3" />
      </svg>
      <div className="ml-[7px] flex h-full w-[256px] items-center justify-end border-b border-[#ccc]"><ChevronDown size={13} color="#aaa" /></div>
      <svg width="20" height="22" viewBox="0 0 20 22" fill="none" stroke="#aaa" strokeWidth="1.500" className="ml-2">
        <circle cx="6" cy="11" r="3" /><path d="M1 20c0-6 10-6 10 0zM9 2h9v6h-5l-3 3" />
      </svg>
      <span className="text-[#aaa]">:0</span>
      <svg width="20" height="20" viewBox="0 0 20 20" className="ml-7"><path d="M1 1h18v18H1zM1 4h18M4 8h2M8 8h8M4 12h2M8 12h8M4 15h2M8 15h8" stroke="#555" strokeWidth="2" fill="#fff" /></svg>
      <svg width="20" height="20" viewBox="0 0 20 20" className="ml-3"><path d="M3 1h16v18H8M3 4h16M3 1v11M6 8h2M10 8h6M10 12h6M1 16h8M6 13l3 3-3 3" stroke="#aaa" strokeWidth="2" fill="none" /></svg>
      <div className="ml-1 flex h-full w-[258px] items-center justify-between border-b border-[#ccc] pl-1 pr-1.5 text-[#aaa]">Main Model<ChevronDown size={13} color="#aaa" /></div>
      <div className="ml-auto mr-[104px] flex items-center">
        {['#e08a3c', '#3f93cf', '#777', '#3f93cf', '#444'].map((c, i) => (
          <button key={i} aria-label={`Selection option ${i + 1}`} className="flex w-[30px] justify-center">
            <svg width="20" height="22" viewBox="0 0 20 22">
              {i === 0 && <path d="M1 3h5v4H1M8 3h7v4H8z" fill="none" stroke={c} strokeWidth="1.500" />}
              {i === 1 && <path d="M1 12l6-8h6v8zM1 14h12v3H1z" fill={c} />}
              {i === 2 && <path d="M3 2h8v3H9v5h3v2H2v-2h3V5H3zM7 12v6" fill="#eee" stroke={c} />}
              {i === 3 && <path d="M1 6l9-5v14l-9 5z" fill={c} />}
              {i === 4 && <path d="M1 10h13M8 3v14M1 10l3-2v4zM8 3l-2 3h4z" fill={c} stroke={c} strokeWidth="1.500" />}
              {(i === 1 || i === 4) && <path d="M12 1l6 6m0-6l-6 6" stroke="#e02828" strokeWidth="2.500" />}
              <path d="M11 9v10l2-2 2 4 2-1-2-4h3z" fill="#fff" stroke="#222" />
            </svg>
          </button>
        ))}
        <svg width="30" height="22" viewBox="0 0 30 22"><circle cx="15" cy="11" r="8" fill="none" stroke="#b0b0b0" strokeWidth="3" strokeDasharray="3 3.300" /></svg>
        <svg width="22" height="20" viewBox="0 0 22 20"><path d="M1 1h20l-8 9v9l-4-3v-6z" fill="#e8e8e8" stroke="#444" strokeWidth="1.500" /></svg>
        <span>:0</span>
      </div>
    </div>
  );
}

function RevitWindow() {
  return (
    <div className="flex w-[51%] flex-col border-r-2 border-[#666] bg-[#d9d9d9] pb-px pr-0.5 font-['Open_Sans','Noto_Sans',sans-serif]">
      <div className="flex min-h-0 flex-1 flex-col pl-1">
        <TitleBar />
        <RibbonTabs />
        <Ribbon />
        <div className="flex min-h-0 flex-1">
          <Properties />
          <main className="flex min-w-0 flex-1 flex-col bg-white">
            <div className="flex h-[25px] items-center bg-[#cbcbcb] pr-1.5">
              <div className="flex h-full w-40 items-center bg-white pl-1.5 text-[14px] font-bold text-[#333]">
                <HouseIcon size={18} />
                <span className="ml-2.5">aco</span>
                <button aria-label="Close view" className="ml-auto mr-1"><X size={17} strokeWidth={3} color="#777" /></button>
              </div>
              <svg width="12" height="12" viewBox="0 0 12 12" className="ml-auto"><path d="M1 2h10M2 6h8l-4 5z" stroke="#777" strokeWidth="2" fill="#777" /></svg>
            </div>
            <div className="flex min-h-0 flex-1">
              <div className="relative min-w-0 flex-1 overflow-hidden">
                <Tower />
                <VyssualsPanel />
              </div>
              <div className="flex w-[22px] flex-col items-center justify-between bg-[#e8e8e8]">
                <span className="flex h-6 w-full items-center justify-center bg-[#f0f0f0]"><ChevronUp size={15} color="#777" /></span>
                <span className="h-6 w-[7px] rounded-sm bg-[#cfcfcf]" />
                <span className="flex h-6 w-full items-center justify-center bg-[#f0f0f0]"><ChevronDown size={15} color="#777" /></span>
              </div>
            </div>
            <ViewControls />
            <div className="h-0.5 bg-[#d0d0d0]" />
          </main>
        </div>
        <StatusBar />
      </div>
    </div>
  );
}

/* ---------- browser window ---------- */

const sideIcons = [
  ['Data', FaDatabase], ['Projects', FaFolderOpen], ['Docs', FaBook], ['Contact', FaEnvelope], ['Privacy', FaShieldHalved],
  ['Downloads', FaDownload], ['Account', FaUser], ['Export PDF', FaFilePdf], ['Log out', FaRightFromBracket],
] as const;

function Chrome() {
  return (
    <header className="font-['Open_Sans','Noto_Sans',sans-serif]">
      <div className="flex h-[47px] items-end bg-[#e3e3e3] pl-2">
        <button aria-label="Search tabs" className="mb-2 flex h-[33px] w-[35px] items-center justify-center rounded-xl bg-[#f1f1f1]"><ChevronDown size={16} strokeWidth={3} /></button>
        <div className="ml-[7px] flex h-[41px] w-[290px] items-center rounded-t-xl bg-white pb-1 pl-[11px] pr-3">
          <Ring size={20} />
          <span className="ml-2.5 text-[14px] text-[#222]">vyssuals.com/app#</span>
          <button aria-label="Close tab" className="ml-auto"><X size={15} strokeWidth={3} /></button>
        </div>
        <button aria-label="New tab" className="mb-3.5 ml-4"><Plus size={18} color="#333" /></button>
        <div className="mb-2 ml-auto mr-2.5 flex gap-[11px]">
          <button aria-label="Minimize window" className="flex h-8 w-11 items-center justify-center"><Minus size={16} /></button>
          <button aria-label="Maximize window" className="flex h-8 w-11 items-center justify-center"><Square size={14} /></button>
          <button aria-label="Close window" className="flex h-8 w-11 items-center justify-center"><X size={18} /></button>
        </div>
      </div>
      <div className="flex h-[60px] items-center border-b border-[#dcdcdc] bg-white px-[18px]">
        <button aria-label="Back"><ArrowLeft size={20} color="#333" /></button>
        <button aria-label="Forward" className="ml-6"><ArrowRight size={20} color="#a8a8a8" /></button>
        <button aria-label="Reload" className="ml-6"><RotateCw size={19} color="#333" /></button>
        <div className="ml-6 flex h-[41px] flex-1 items-center rounded-full bg-[#efedee] px-1.5">
          <span className="flex size-[30px] items-center justify-center rounded-full bg-white">
            <svg width="16" height="16" viewBox="0 0 16 16" fill="none" stroke="#222" strokeWidth="1.800"><circle cx="3.500" cy="4" r="2.200" /><path d="M8 4h7M1 12h7" /><circle cx="12.500" cy="12" r="2.200" /></svg>
          </span>
          <input aria-label="Address" defaultValue="vyssuals.com/app#" className="ml-2.5 flex-1 bg-transparent text-[16px] text-[#222]" />
          <button aria-label="Bookmark" className="mr-3"><Star size={20} color="#333" /></button>
        </div>
        <button aria-label="Extensions" className="ml-6"><Puzzle size={21} color="#333" /></button>
        <button aria-label="Profile" className="ml-11">
          <svg width="26" height="26" viewBox="0 0 26 26">
            <circle cx="13" cy="13" r="13" fill="#9b9a94" />
            <path d="M3 21c2-6 6-7 10-7s8 2 10 7a13 13 0 0 1-20 0z" fill="#5b4a42" />
            <circle cx="13" cy="10" r="5" fill="#c99f86" />
            <path d="M7 9c0-6 12-6 12 0z" fill="#4a3a30" />
          </svg>
        </button>
        <button aria-label="Menu" className="ml-5"><EllipsisVertical size={20} color="#333" /></button>
      </div>
    </header>
  );
}

// Slices are drawn inset by the corner radius and stroked back out, which rounds the corners
const slice = (from: number, to: number) => {
  const c = 6;
  const R = 189 - c;
  const r = 95 + c;
  const pt = (rad: number, deg: number, sign: number) => {
    const a = ((deg - 90) * Math.PI) / 180 + (sign * (c + 1)) / rad;
    return `${(rad * Math.cos(a)).toFixed(2)} ${(rad * Math.sin(a)).toFixed(2)}`;
  };
  const big = to - from > 180 ? 1 : 0;
  return `M${pt(R, from, 1)}A${R} ${R} 0 ${big} 1 ${pt(R, to, -1)}L${pt(r, to, -1)}A${r} ${r} 0 ${big} 0 ${pt(r, from, 1)}Z`;
};

function ChartCard() {
  return (
    <article className="relative h-[534px] w-[796px] rounded-[18px] border border-white bg-[radial-gradient(circle_at_32%_20%,#c8eafc,transparent_50%),radial-gradient(circle_at_70%_88%,#f7cbe6,transparent_50%),linear-gradient(120deg,#d3e2fa,#dfdaf2_60%,#e6d9f0)] font-['Inter',sans-serif] text-[#234a68] shadow-[0_4px_24px_rgba(60,70,90,0.18),inset_0_0_60px_rgba(255,255,255,0.75)]">
      <div className="px-7 pt-[23px]">
        <h2 className="bg-linear-to-r from-[#214866] to-[#2b3d60] bg-clip-text text-[41px] font-bold leading-[60px] text-transparent">Curtain Panel Area by Type</h2>
        <p className="pl-0.5 text-[17px] font-light leading-6">241126_Tower... | Latest update | Curtain Panels | Square Meters</p>
      </div>
      <button aria-label="Close chart" className="absolute right-7 top-6"><X size={20} color="#c5ccdc" /></button>
      <svg viewBox="2165 117 795 533" className="absolute inset-0 size-full" role="img" aria-label="Curtain panel area by type">
        <defs>
          <radialGradient id="mag" gradientUnits="userSpaceOnUse" cx="70" cy="110" r="380">
            <stop offset="0" stopColor="#de0898" />
            <stop offset="0.35" stopColor="#d80c9a" />
            <stop offset="1" stopColor="#b428ac" />
          </radialGradient>
        </defs>
        <g transform="translate(2562 433)" strokeWidth="12" strokeLinejoin="round">
          <path d={slice(0, 317.5)} fill="url(#mag)" stroke="url(#mag)" />
          <path d={slice(317.5, 340.2)} fill="#0ca8fd" stroke="#0ca8fd" />
          <path d={slice(340.2, 360)} fill="#95d93c" stroke="#95d93c" />
        </g>
        <g fill="none" stroke="#27406a" strokeOpacity="0.55" strokeWidth="1.300">
          <path d="M2352 263h180l5 29" />
          <path d="M2352 286h120l15 25" />
          <path d="M2614 565l11 27h147" />
        </g>
        <g fontSize="12" fill="#2a3f62" fontFamily="Inter, sans-serif">
          <g textAnchor="end">
            <text x="2348" y="265" fontWeight="300" fontSize="13">Lobby</text>
            <text x="2348" y="280" fontWeight="700">Area: 1,465.21 (5.5%)</text>
            <text x="2348" y="288" fontWeight="300" fontSize="13">Tech</text>
            <text x="2348" y="303" fontWeight="700">Area: 1,699.67 (6.3%)</text>
          </g>
          <text x="2775" y="593" fontWeight="300" fontSize="13">Regular</text>
          <text x="2775" y="608" fontWeight="700">Area: 23,612.13 (88.2%)</text>
        </g>
      </svg>
    </article>
  );
}

function Option({ icon, label, value }: { icon: ReactNode; label: string; value: string }) {
  return (
    <button className="flex h-10 w-full items-center pl-[5px] text-[18px] text-[#22384c]">
      <span className="w-[33px]">{icon}</span>
      <span className="font-light">{label}</span>
      <span className="ml-auto font-medium text-[#9a9a9a]">{value}</span>
      <ChevronRight size={23} color="#8a8a8a" className="-mr-1.5" />
    </button>
  );
}

const Head = ({ children }: { children: ReactNode }) => (
  <h3 className="mb-[5px] mt-[29px] text-[16px] font-medium leading-[22px] text-[#999]">{children}</h3>
);

function OptionsPanel() {
  const kinds = [['Bar', FaChartSimple], ['Pie', FaChartPie], ['Line', FaChartLine], ['Number', FaHashtag], ['Percent', FaPercent]] as const;
  const ic = { size: 20, color: '#22384c' };
  return (
    <section className="relative w-[417px] rounded-[18px] border border-[#f0f2f6] bg-[#fafbfd] bg-[radial-gradient(ellipse_170px_70px_at_88%_5%,#dedfe0,transparent)] px-5 pb-[25px] pt-[34px] font-['Inter',sans-serif] shadow-[0_4px_24px_rgba(60,70,90,0.18)]">
      <div className="absolute right-6 top-6 flex items-center gap-[18px]">
        <button aria-label="Duplicate">
          <svg width="21" height="21" viewBox="0 0 21 21" fill="none" stroke="#000" strokeWidth="1.700">
            <rect x="7" y="1" width="13" height="13" rx="2" />
            <path d="M5 7H3a2 2 0 0 0-2 2v9a2 2 0 0 0 2 2h9a2 2 0 0 0 2-2v-1" />
          </svg>
        </button>
        <button aria-label="Apply"><Check size={21} strokeWidth={2.5} /></button>
        <button aria-label="Close options"><X size={18} strokeWidth={3} /></button>
      </div>
      <h3 className="mb-3 text-[16px] font-medium leading-[22px] text-[#999]">Chart Type</h3>
      <div className="flex gap-3">
        {kinds.map(([k, Icon]) => (
          <button key={k} aria-label={k} className={`flex h-[62px] w-[63px] items-center justify-center rounded-[10px] ${k === 'Pie' ? 'border border-[#223a54] bg-white' : ''}`}>
            <Icon size={k === 'Percent' ? 17 : 20} />
          </button>
        ))}
      </div>
      <h3 className="mb-[7px] mt-[22px] text-[16px] font-medium leading-[22px] text-[#999]">General</h3>
      <label className="mb-1 flex h-[50px] items-center pl-[5px] text-[18px] text-[#22384c]">
        <span className="w-[33px]"><FaHeart {...ic} /></span>
        <span className="font-light">Title</span>
        <input defaultValue="Curtain Panel Area by Type" className="ml-auto h-[43px] w-[241px] rounded-xl bg-white text-center font-['Liberation_Sans',sans-serif] text-[18px] text-black" />
      </label>
      <Option icon={<FaDatabase {...ic} />} label="Sources" value="241126_Tower" />
      <Option icon={<FaClockRotateLeft {...ic} />} label="Updates" value="Using Latest" />
      <Head>Filters</Head>
      <Option icon={<FaListCheck {...ic} />} label="Categories" value="Curtain Panels" />
      <Option icon={<FaFilter {...ic} />} label="Advanced Filters" value="<No Filters>" />
      <Head>Groups (X-Axis)</Head>
      <Option icon={<FaArrowRight {...ic} />} label="Group By" value="Type Name" />
      <Head>Slice Size</Head>
      <Option icon={<FaPizzaSlice {...ic} />} label="Slice Size By" value="Area" />
      <Head>Color</Head>
      <Option icon={<FaPalette {...ic} />} label="Color Palette" value="Edit" />
    </section>
  );
}

function BrowserWindow() {
  return (
    <div className="flex min-w-0 flex-1 flex-col bg-white">
      <Chrome />
      <div className="flex min-h-0 flex-1">
        <div className="flex min-w-0 flex-1 items-start bg-[linear-gradient(to_top_right,#f4deea,#ece6ee_42%,#e7e8f3_62%,#dfedf1)]">
          <nav className="flex flex-col pl-[37px] pt-8">
            <a href="#home" aria-label="Vyssuals" className="mb-[43px]"><Ring size={26} mono /></a>
            {sideIcons.map(([label, Icon]) => (
              <a key={label} href={`#${label}`} aria-label={label} className="mb-10 ml-1 block h-5"><Icon size={20} color="#22384c" /></a>
            ))}
          </nav>
          <div className="relative ml-auto flex gap-2.5 self-stretch pr-[11px] pt-2.5">
            <div><ChartCard /></div>
            <div><OptionsPanel /></div>
            <span className="absolute right-0 top-[100px] h-11 w-[11px] overflow-hidden bg-[#e9f0f4] font-['Inter',sans-serif] text-[15px] leading-[44px] text-[#778]">n</span>
          </div>
        </div>
        <div className="flex w-5 flex-col items-center bg-[#f1f1f1] pb-1">
          <svg width="12" height="20" viewBox="0 0 12 20"><path d="M1 13h10L6 8z" fill="#8a8a8a" /></svg>
          <div className="w-[17px] flex-[1308] bg-[#c1c1c1]" />
          <div className="flex-[328]" />
          <svg width="12" height="16" viewBox="0 0 12 16"><path d="M1 6h10l-5 5z" fill="#555" /></svg>
        </div>
      </div>
      <div className="flex h-[19px] items-center bg-[#f1f1f1] pl-1.5 pr-5">
        <svg width="14" height="12" viewBox="0 0 14 12"><path d="M8 1v10L3 6z" fill="#8a8a8a" /></svg>
        <div className="h-[15px] flex-[1327] bg-[#c1c1c1]" />
        <div className="flex-[290]" />
        <svg width="14" height="12" viewBox="0 0 14 12"><path d="M5 1v10l5-5z" fill="#555" /></svg>
      </div>
    </div>
  );
}

export default function App() {
  return (
    <div className="flex h-screen w-full overflow-hidden">
      <RevitWindow />
      <BrowserWindow />
    </div>
  );
}
